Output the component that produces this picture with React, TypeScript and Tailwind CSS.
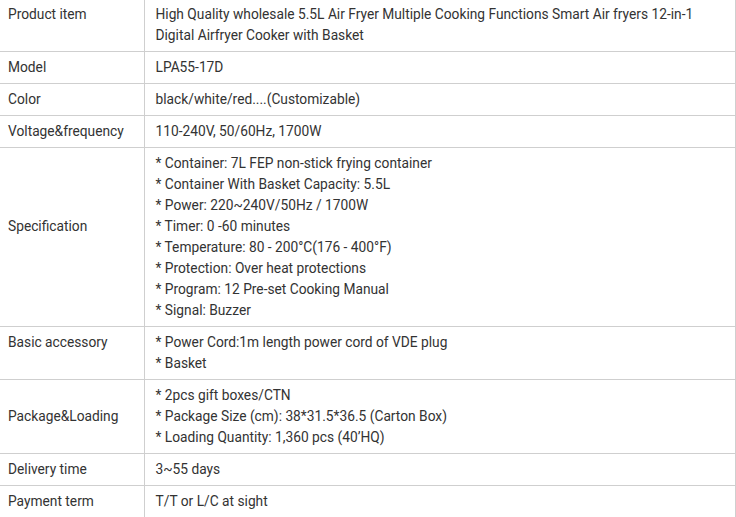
import React from 'react';

const rows: { label: string; lines: string[]; lift?: boolean }[] = [
  {
    label: 'Product item',
    lines: [
      'High Quality wholesale 5.5L Air Fryer Multiple Cooking Functions Smart Air fryers 12-in-1 Digital Airfryer Cooker with Basket',
    ],
  },
  { label: 'Model', lines: ['LPA55-17D'] },
  { label: 'Color', lines: ['black/white/red....(Customizable)'] },
  { label: 'Voltage&frequency', lines: ['110-240V, 50/60Hz, 1700W'] },
  {
    label: 'Specification',
    lift: true,
    lines: [
      '* Container: 7L FEP non-stick frying container',
      '* Container With Basket Capacity: 5.5L',
      '* Power: 220~240V/50Hz / 1700W',
      '* Timer: 0 -60 minutes',
      '* Temperature: 80 - 200°C(176 - 400°F)',
      '* Protection: Over heat protections',
      '* Program: 12 Pre-set Cooking Manual',
      '* Signal: Buzzer',
    ],
  },
  {
    label: 'Basic accessory',
    lift: true,
    lines: ['* Power Cord:1m length power cord of VDE plug', '* Basket'],
  },
  {
    label: 'Package&Loading',
    lines: [
      '* 2pcs gift boxes/CTN',
      '* Package Size (cm): 38*31.5*36.5 (Carton Box)',
      '* Loading Quantity: 1,360 pcs (40’HQ)',
    ],
  },
  { label: 'Delivery time', lines: ['3~55 days'] },
  { label: 'Payment term', lines: ['T/T or L/C at sight'] },
];

export default function App() {
  return (
    <div className="w-[736px] h-[517px] overflow-hidden bg-white">
      <table
        className="w-[736px] border-collapse text-[13.75px] leading-[21px] text-[#333]"
        style={{ fontFamily: 'Roboto, "Liberation Sans", sans-serif' }}
      >
        <tbody>
          {rows.map((row, i) => (
            <tr key={row.label} className={i === 0 ? '' : 'border-t border-[#cfcfcf]'}>
              <td
                className={`w-[144px] border-r border-[#cfcfcf] pl-2 pr-2 ${
                  i === 0 ? 'pt-[4px] pb-[5px] align-top' : 'py-[5px] align-middle'
                }`}
              >
                <div>{row.label}</div>
                {row.lift && <div>&nbsp;</div>}
              </td>
              <td
                className={`border-r border-[#cfcfcf] pl-[11px] pr-[9px] align-middle ${
                  i === 0 ? 'pt-[4px] pb-[5px]' : 'py-[5px]'
                }`}
              >
                {row.lines.map((l) => (
                  <div key={l}>{l}</div>
                ))}
              </td>
            </tr>
          ))}
        </tbody>
      </table>
    </div>
  );
}
